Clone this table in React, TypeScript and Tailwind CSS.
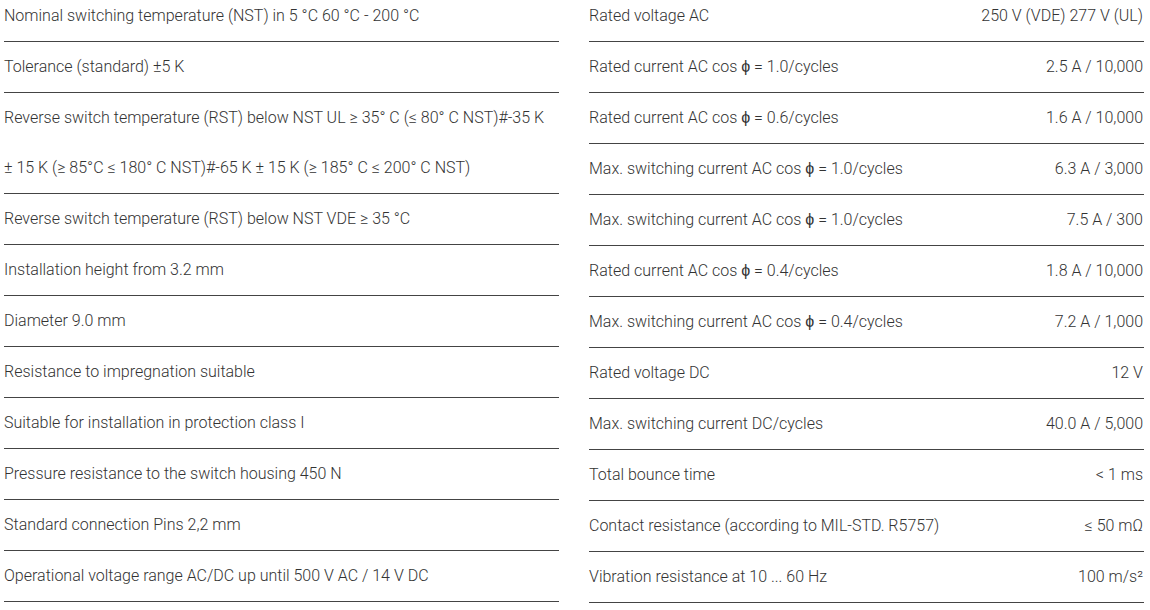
const left: string[][] = [
  ['Nominal switching temperature (NST) in 5 °C 60 °C - 200 °C'],
  ['Tolerance (standard) ±5 K'],
  [
    'Reverse switch temperature (RST) below NST UL ≥ 35° C (≤ 80° C NST)#-35 K',
    '± 15 K (≥ 85°C ≤ 180° C NST)#-65 K ± 15 K (≥ 185° C ≤ 200° C NST)',
  ],
  ['Reverse switch temperature (RST) below NST VDE ≥ 35 °C'],
  ['Installation height from 3.2 mm'],
  ['Diameter 9.0 mm'],
  ['Resistance to impregnation suitable'],
  ['Suitable for installation in protection class I'],
  ['Pressure resistance to the switch housing 450 N'],
  ['Standard connection Pins 2,2 mm'],
  ['Operational voltage range AC/DC up until 500 V AC / 14 V DC'],
]

const right: [string, string][] = [
  ['Rated voltage AC', '250 V (VDE) 277 V (UL)'],
  ['Rated current AC cos ϕ = 1.0/cycles', '2.5 A / 10,000'],
  ['Rated current AC cos ϕ = 0.6/cycles', '1.6 A / 10,000'],
  ['Max. switching current AC cos ϕ = 1.0/cycles', '6.3 A / 3,000'],
  ['Max. switching current AC cos ϕ = 1.0/cycles', '7.5 A / 300'],
  ['Rated current AC cos ϕ = 0.4/cycles', '1.8 A / 10,000'],
  ['Max. switching current AC cos ϕ = 0.4/cycles', '7.2 A / 1,000'],
  ['Rated voltage DC', '12 V'],
  ['Max. switching current DC/cycles', '40.0 A / 5,000'],
  ['Total bounce time', '< 1 ms'],
  ['Contact resistance (according to MIL-STD. R5757)', '≤ 50 mΩ'],
  ['Vibration resistance at 10 ... 60 Hz', '100 m/s²'],
]

// the symbol is set a touch heavier than the surrounding light text
function Label({ text }: { text: string }) {
  const parts = text.split('ϕ')
  if (parts.length === 1) return <>{text}</>
  return (
    <>
      {parts[0]}
      <span className="font-medium">ϕ</span>
      {parts[1]}
    </>
  )
}

export default function App() {
  return (
    <div className="h-[610px] w-[1150px] overflow-hidden bg-white font-['Roboto',sans-serif] text-[16px] font-light text-[#333]">
      <div className="-mt-[9px] flex gap-[30px] pl-[4px]">
        <div className="w-[555px]">
          {left.map((lines, i) => (
            <div key={i} className="border-b border-[#444] leading-[50px]">
              {lines.map((l, j) => (
                <div key={j} className="whitespace-nowrap">
                  {l}
                </div>
              ))}
            </div>
          ))}
        </div>
        <div className="w-[555px]">
          {right.map(([k, v], i) => (
            <div
              key={i}
              className="flex justify-between border-b border-[#444] pr-[1px] leading-[50px] whitespace-nowrap"
            >
              <span>
                <Label text={k} />
              </span>
              <span>{v}</span>
            </div>
          ))}
        </div>
      </div>
    </div>
  )
}
